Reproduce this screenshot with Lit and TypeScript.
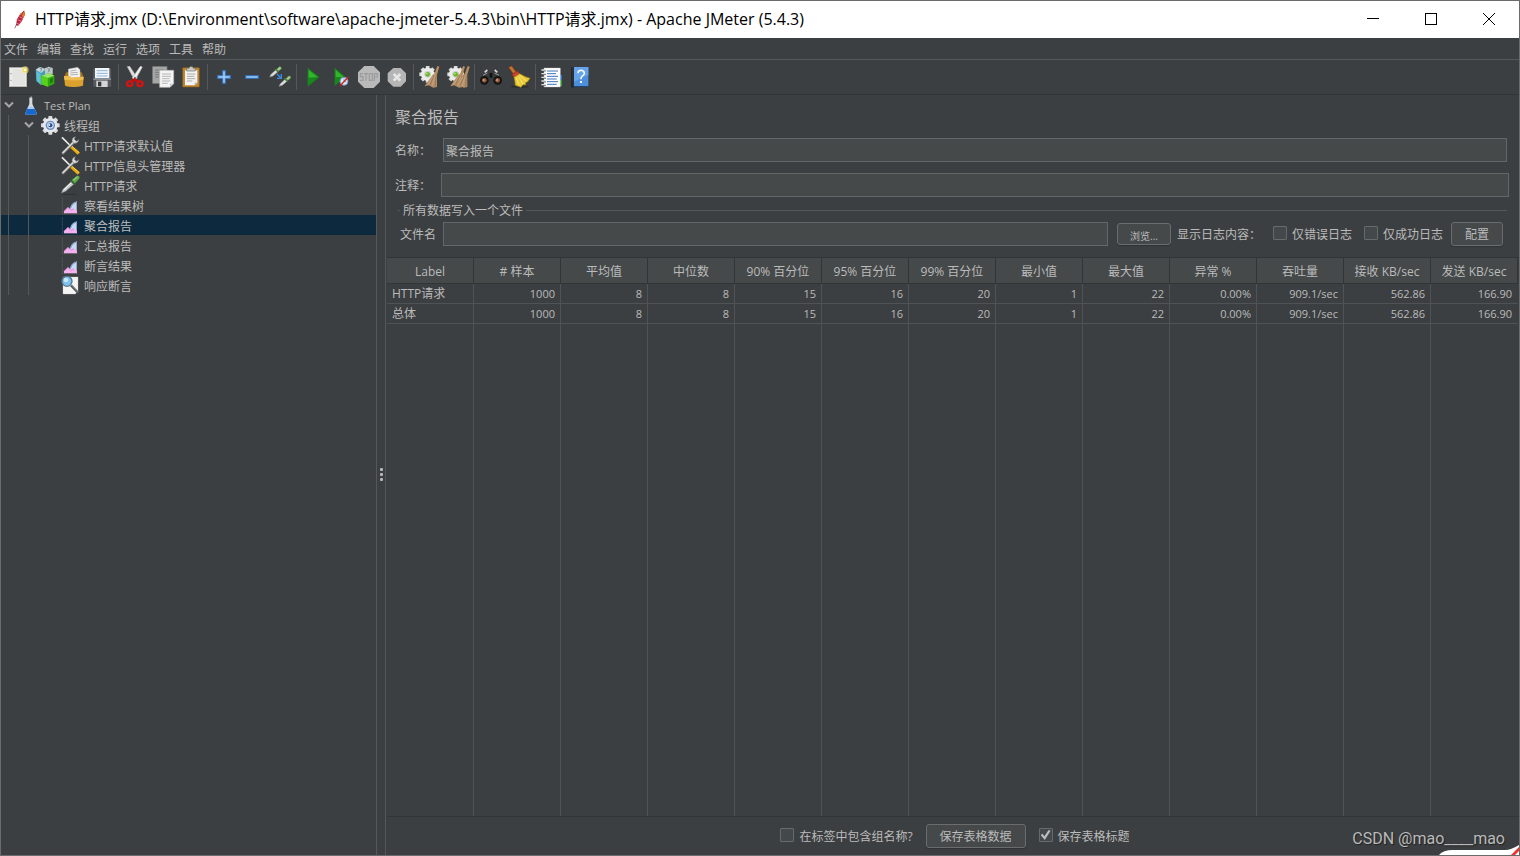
import { LitElement, html, css, svg, TemplateResult } from "lit";
import { customElement, property, state } from "lit/decorators.js";
import { classMap } from "lit/directives/class-map.js";

type Glyph = TemplateResult<2>;

/* Toolbar glyphs, drawn on a 72-unit grid */
const gear = (x: number, y: number, r: number) => svg`
  <g transform="translate(${x} ${y})">
    ${[0, 45, 90, 135].map((a) => svg`<rect x=${-r * 0.22} y=${-r} width=${r * 0.44} height=${r * 2} fill="#dcdcdc" transform="rotate(${a})"/>`)}
    <circle r=${r * 0.8} fill="#ececec"/><circle r=${r * 0.4} fill="#c9cfc0"/>
    <circle r=${r * 0.28} fill="#6cb52c"/><circle cx=${-r * 0.1} cy=${-r * 0.1} r=${r * 0.12} fill="#a5e066"/>
  </g>`;

const whisk = (dx: number) => svg`
  <g transform="translate(${dx} 0)">
    <path d="M58 3 64 5 56 32 48 30Z" fill="#b98d5d"/>
    <path d="M46 27 57 31 57 66 46 68 32 61 20 64 32 46Z" fill="#b5906a"/>
    <path d="M48 32 36 60M54 33 52 65" stroke="#8d6a48" stroke-width="2" fill="none"/>
    <path d="M51 32 42 62M44 36 29 60" stroke="#d0ae86" stroke-width="2" fill="none"/>
  </g>`;

const dropper = svg`
  <path d="M0 32 4 24 19 10 25 16 10 29Z" fill="#dedede" stroke="#8d8d8d" stroke-width="1.5"/>
  <path d="M17 8 26 17" stroke="#4c7a3a" stroke-width="5"/>
  <path d="M21 9 29 1Q36 0 35 7L27 14Z" fill="#a0cd8b" stroke="#5d9548" stroke-width="1"/>`;

const ICONS: Record<string, Glyph> = {
  new: svg`
    <rect x="10" y="8" width="52" height="57" fill="#ececea" stroke="#bdbdb8" stroke-width="2"/>
    <rect x="19" y="12" width="38" height="49" fill="#e3e3e1"/>
    <circle cx="15" cy="26" r="2" fill="#8e8e8e"/><circle cx="15" cy="46" r="2" fill="#8e8e8e"/>
    <circle cx="57" cy="15" r="11" fill="#f3ea8c" opacity=".6"/><circle cx="57" cy="15" r="7" fill="#ecd94a"/><circle cx="57" cy="15" r="4" fill="#fffde0"/>`,
  templates: svg`
    <path d="M5 14 17 6 34 12 34 56 20 60 7 48Z" fill="#3f9cb8"/>
    <path d="M5 14 17 6 34 12 22 24Z" fill="#c9d4d8"/><path d="M7 18 20 26 20 58 8 48Z" fill="#63bdd4"/>
    <path d="M32 10 44 5 56 9 56 28 34 32Z" fill="#bfc9cc"/><path d="M14 6 24 14M24 6 20 20M40 7 48 20M50 7 42 22" stroke="#7c8c92" stroke-width="2.500"/>
    <path d="M22 32 46 24 61 32 61 56 42 65 22 58Z" fill="#2fa80e"/><path d="M22 32 46 24 61 32 41 39Z" fill="#9be36a"/>
    <path d="M22 32 41 39 42 65 22 58Z" fill="#58d11d"/><path d="M48 42 56 38 56 51 49 55Z" fill="#1a7605"/>`,
  open: svg`
    <path d="M8 32 13 22 59 22 63 32 63 60 8 60Z" fill="#a87415"/>
    <path d="M19 12 47 7 54 14 55 42 19 42Z" fill="#f2f2f2" stroke="#aaa"/><path d="M25 18 43 15M25 24 47 22M25 30 48 28" stroke="#a2a2a2" stroke-width="2.500"/>
    <path d="M6 33 23 33 28 38 65 35 63 62 Q36 69 10 63Z" fill="#dba12e"/><path d="M6 33 23 33 28 38 65 35 64 44 Q34 48 7 44Z" fill="#edbd52"/>`,
  save: svg`
    <rect x="8" y="9" width="57" height="58" rx="3" fill="#55585e" stroke="#34363a" stroke-width="2"/>
    <rect x="15" y="9" width="43" height="31" fill="#f2f5f8"/><path d="M20 17H53M20 25H53M20 33H53" stroke="#8fb3d8" stroke-width="3"/>
    <rect x="10" y="40" width="53" height="5" fill="#8a8f97"/>
    <rect x="19" y="47" width="34" height="19" fill="#d4d4d6"/><rect x="24" y="50" width="10" height="14" fill="#34363a"/>`,
  cut: svg`
    <path d="M13 5 20 4 43 39 35 46Z" fill="#e0e0e0" stroke="#b5b5b5" stroke-width="2"/><path d="M58 6 52 4 28 39 36 46Z" fill="#f4f4f4" stroke="#b5b5b5" stroke-width="2"/>
    <circle cx="36" cy="38" r="2.500" fill="#555"/>
    <ellipse cx="20" cy="56" rx="8" ry="7" fill="none" stroke="#d11414" stroke-width="7"/><ellipse cx="51" cy="56" rx="8" ry="7" fill="none" stroke="#d11414" stroke-width="7"/>
    <path d="M26 50 35 43 45 50" fill="none" stroke="#c31010" stroke-width="8"/>`,
  copy: svg`
    <rect x="5" y="5" width="43" height="50" fill="#a5a7a7" stroke="#7d7f7f" stroke-width="2"/><path d="M12 15H38M12 22H38M12 29H26M12 36H24" stroke="#77797a" stroke-width="3"/>
    <path d="M26 16H68V56L57 67H26Z" fill="#f4f4f4" stroke="#b6b6b6" stroke-width="2"/><path d="M57 67V56H68Z" fill="#c6c6c6"/>
    <path d="M33 27H60M33 34H60M33 41H56M33 48H58M33 55H50" stroke="#a8a8a8" stroke-width="2.500"/>`,
  paste: svg`
    <rect x="11" y="8" width="50" height="58" rx="2" fill="#c08833" stroke="#83591b" stroke-width="2"/>
    <path d="M18 16H55V53L47 61H18Z" fill="#f3f3f3"/><path d="M47 61V53H55Z" fill="#a9a9a9"/>
    <path d="M24 27H49M24 34H46M24 41H49M24 48H40" stroke="#9e9e9e" stroke-width="2.500"/>
    <path d="M23 10H30L33 5H40L43 10H49V18H23Z" fill="#c9cbc6" stroke="#74766f" stroke-width="2"/>`,
  expand: svg`<path d="M31 16H41V31H56V41H41V56H31V41H16V31H31Z" fill="#5f9fe4" stroke="#2c66ae" stroke-width="2"/><path d="M36 20V52M20 36H52" stroke="#b5d7fb" stroke-width="3"/>`,
  collapse: svg`<rect x="16" y="31" width="40" height="10" fill="#5f9fe4" stroke="#2c66ae" stroke-width="2"/><path d="M20 36H52" stroke="#a9d0fa" stroke-width="3"/>`,
  toggle: svg`
    <g transform="translate(5 4)">${dropper}</g><g transform="translate(33 32)">${dropper}</g>
    <path d="M27 27 38 38M40 27V40H27" fill="none" stroke="#3d8be0" stroke-width="4"/>`,
  start: svg`<path d="M20 8 55 36 20 65Z" fill="#17891a"/><path d="M23 15 49 36 23 38Z" fill="#35b52e"/>`,
  startNoTimers: svg`
    <path d="M17 8 49 35 17 63Z" fill="#17891a"/><path d="M20 15 43 35 20 37Z" fill="#35b52e"/>
    <circle cx="45" cy="49" r="12" fill="#dce9f5" stroke="#6b93bd" stroke-width="3"/><path d="M45 41V50H52" fill="none" stroke="#4a77a8" stroke-width="2"/>
    <path d="M33 62 58 36" stroke="#d81d1d" stroke-width="4"/>`,
  stop: svg`
    <path d="M22 3H50L69 22V50L50 69H22L3 50V22Z" fill="#b9b9b9"/>
    <g fill="none" stroke="#9c9c9c" stroke-width="3.500"><path d="M18 26H10V35H18V46H9M21 26H33M27 26V47M37 26H46V46H37ZM52 48V26H61V36H52"/></g>`,
  shutdown: svg`
    <path d="M25 9H47L63 25V49L47 65H25L8 49V25Z" fill="#b5b5b5"/><path d="M26 27 46 47M46 27 26 47" stroke="#e6e6e6" stroke-width="8"/>`,
  clear: svg`${gear(29, 28, 25)}${whisk(0)}`,
  clearAll: svg`${gear(29, 28, 25)}${whisk(-7)}${whisk(7)}`,
  search: svg`
    <path d="M17 22 27 14 33 17 34 49 5 46Z" fill="#38393b"/><path d="M55 22 45 14 39 17 38 49 67 46Z" fill="#38393b"/>
    <path d="M17 22 25 15M47 15 55 22" stroke="#d6d6d6" stroke-width="5"/><path d="M12 31 25 24M47 24 60 31" stroke="#9c9c9c" stroke-width="3"/>
    <rect x="32" y="24" width="8" height="14" fill="#111"/>
    <circle cx="16" cy="46" r="13" fill="#141414"/><circle cx="56" cy="46" r="13" fill="#141414"/>
    <circle cx="16" cy="46" r="7" fill="#93583a"/><circle cx="56" cy="46" r="7" fill="#93583a"/>
    <circle cx="14" cy="45" r="3" fill="#cda083"/><circle cx="54" cy="45" r="3" fill="#cda083"/>`,
  resetSearch: svg`
    <ellipse cx="38" cy="65" rx="27" ry="4" fill="#2c2e2f"/>
    <path d="M5 7 14 3 28 22 20 28Z" fill="#c8742e" stroke="#843d11" stroke-width="2"/>
    <path d="M15 28 32 18 38 27 21 38Z" fill="#c9442c" stroke="#85261a" stroke-width="2"/>
    <path d="M21 37 38 26Q54 36 69 40L61 51 57 51 55 60 48 59 42 67 25 61Q24 46 21 37Z" fill="#e8ca38" stroke="#a98a18" stroke-width="2"/>
    <path d="M28 38 36 60M34 34 48 57M38 31 58 48" stroke="#f8e678" stroke-width="3"/>`,
  functions: svg`
    <rect x="58" y="30" width="8" height="14" fill="#2e74d0"/><rect x="58" y="45" width="8" height="18" fill="#2f9b2b"/>
    <rect x="12" y="9" width="49" height="57" fill="#fdfdfd" stroke="#c2c2c2"/>
    <path d="M21 18H54M21 26H48M21 34H54M21 42H50M21 50H54M21 58H50" stroke="#3f74b8" stroke-width="3"/>
    <path d="M4 15H17M4 26H17M4 37H17M4 48H17M4 59H17" stroke="#ddd" stroke-width="4"/><path d="M12 18H18M12 29H18M12 40H18M12 51H18M12 62H18" stroke="#333" stroke-width="2"/>`,
  help: svg`
    <path d="M10 7H19V67H10Z" fill="#15171a"/><path d="M10 7 15 5 20 7V66L13 67Z" fill="#2c3036"/>
    <rect x="18" y="6" width="43" height="58" fill="#4d8fdc"/><path d="M18 6H61V30L18 50Z" fill="#66a4ea"/><path d="M14 67 18 63H61V67Z" fill="#23466f"/>
    <path d="M30 25Q30 16 40 16 49 17 49 25 49 31 42 34 39 37 39 43" fill="none" stroke="#fff" stroke-width="4.500"/><rect x="36" y="48" width="6" height="6" fill="#fff"/>`,
};

/* Tree glyphs, drawn on a 60-unit grid */
const TREE_ICONS: Record<string, Glyph> = {
  flask: svg`
    <path d="M28 8H37V27L50 54Q51 59 47 59H19Q14 59 16 54L28 27Z" fill="#d5dade"/><path d="M23 38H42L50 54Q51 59 47 59H19Q14 59 16 54Z" fill="#1767cd"/>
    <path d="M24 36Q32 31 41 36L43 42H22Z" fill="#a9cdf5"/><path d="M34 3 37 9H28Z" fill="#9fa6ab"/>`,
  gear: svg`
    <g transform="translate(31 31)">${[0, 45, 90, 135].map((a) => svg`<rect x="-6" y="-28" width="12" height="56" rx="2" fill="#d9dce0" transform="rotate(${a})"/>`)}
    <circle r="22" fill="#e6e8ec"/><circle r="14" fill="#6d8fbe"/><circle r="10" fill="#c3d5ec"/><circle r="6" fill="#22488a"/><circle cx="-3" cy="-1" r="3" fill="#f0f6fd"/></g>`,
  tools: svg`
    <path d="M6 7 29 30" stroke="#e2e2e2" stroke-width="5"/><path d="M28 31 34 37" stroke="#8b8b8b" stroke-width="5"/>
    <path d="M9 54 42 21" stroke="#6e6e6e" stroke-width="9" stroke-linecap="round"/><path d="M9 53 42 20" stroke="#d6d6d4" stroke-width="5" stroke-linecap="round"/>
    <path d="M46 5Q36 7 36 18L43 25Q54 25 57 14L49 19 43 13Z" fill="#dcdcda" stroke="#777" stroke-width="1.500"/>
    <path d="M34 36 56 56" stroke="#eaa90c" stroke-width="9"/><path d="M36 34 58 53" stroke="#ffd75c" stroke-width="2.500"/><path d="M6 7 32 33" stroke="#fafafa" stroke-width="1.500"/>`,
  dropper: svg`
    <path d="M10 58H50" stroke="#26292a" stroke-width="3" opacity=".6"/>
    <path d="M4 54 9 43 33 20 41 28 17 49Z" fill="#c9cdcd" stroke="#777c7c" stroke-width="1.500"/><path d="M11 45 34 23" stroke="#fff" stroke-width="3"/>
    <path d="M31 15 46 29" stroke="#39662c" stroke-width="5"/><path d="M35 15 50 3Q58 1 59 7 59 11 45 25Z" fill="#5fae4a"/><path d="M40 15 52 6" stroke="#a4dc8e" stroke-width="3"/>`,
  chart: svg`
    <path d="M7 8V56H54" fill="none" stroke="#77797b" stroke-width="2" stroke-dasharray="3 3"/>
    <path d="M29 43Q33 24 50 19V54H35Z" fill="#c9d8f4"/><path d="M30 42Q34 27 50 20" fill="none" stroke="#6f92d2" stroke-width="2.500"/>
    <path d="M12 55V49L24 37 33 46 42 41 51 48V55Z" fill="#f3b2ee"/><path d="M12 49 24 37 33 46 42 41" fill="none" stroke="#e07fd2" stroke-width="2.500"/>`,
  lens: svg`
    <path d="M9 6H54V48L46 57H9Z" fill="#f5f5f5" stroke="#c2c2c2"/><path d="M33 31 55 54" stroke="#4f5354" stroke-width="7"/><path d="M34 30 55 51" stroke="#a8adae" stroke-width="2"/>
    <circle cx="21" cy="19" r="15" fill="#7dc1ec" stroke="#55778f" stroke-width="4"/><circle cx="18" cy="15" r="7" fill="#c8e8fb"/>`,
};

interface Tool { icon: string; label: string }
const TOOLS: Tool[][] = [
  [{ icon: "new", label: "新建" }, { icon: "templates", label: "模板" }, { icon: "open", label: "打开" }, { icon: "save", label: "保存" }],
  [{ icon: "cut", label: "剪切" }, { icon: "copy", label: "复制" }, { icon: "paste", label: "粘贴" }],
  [{ icon: "expand", label: "展开" }, { icon: "collapse", label: "折叠" }, { icon: "toggle", label: "切换" }],
  [{ icon: "start", label: "启动" }, { icon: "startNoTimers", label: "不停顿开始" }, { icon: "stop", label: "停止" }, { icon: "shutdown", label: "关闭" }],
  [{ icon: "clear", label: "清除" }, { icon: "clearAll", label: "清除全部" }],
  [{ icon: "search", label: "查找" }, { icon: "resetSearch", label: "重置查找" }],
  [{ icon: "functions", label: "函数助手" }, { icon: "help", label: "帮助" }],
];

interface Node { label: string; depth: number; icon: string; open?: boolean; latin?: boolean }
const NODES: Node[] = [
  { label: "Test Plan", depth: 0, icon: "flask", open: true, latin: true },
  { label: "线程组", depth: 1, icon: "gear", open: true },
  { label: "HTTP请求默认值", depth: 2, icon: "tools" },
  { label: "HTTP信息头管理器", depth: 2, icon: "tools" },
  { label: "HTTP请求", depth: 2, icon: "dropper" },
  { label: "察看结果树", depth: 2, icon: "chart" },
  { label: "聚合报告", depth: 2, icon: "chart" },
  { label: "汇总报告", depth: 2, icon: "chart" },
  { label: "断言结果", depth: 2, icon: "chart" },
  { label: "响应断言", depth: 2, icon: "lens" },
];

const COLUMNS = ["Label", "# 样本", "平均值", "中位数", "90% 百分位", "95% 百分位", "99% 百分位", "最小值", "最大值", "异常 %", "吞吐量", "接收 KB/sec", "发送 KB/sec"];
const ROWS = [
  ["HTTP请求", "1000", "8", "8", "15", "16", "20", "1", "22", "0.00%", "909.1/sec", "562.86", "166.90"],
  ["总体", "1000", "8", "8", "15", "16", "20", "1", "22", "0.00%", "909.1/sec", "562.86", "166.90"],
];

const controls = css`
  *, *::before { box-sizing: border-box; }
  button, input { font: inherit; color: inherit; margin: 0; }
  .btn { height: 24px; padding: 2px 0 0; color: #bbb; background: #45494a; border: 1px solid #6a6d6e; border-radius: 3px; box-shadow: 0 1px 1px #303335; white-space: nowrap; }
  .box { appearance: none; flex: none; display: grid; place-items: center; width: 14px; height: 14px; margin-bottom: 4px; background: #43484a; border: 1px solid #676a6b; border-radius: 1px; }
  .box:checked::before { content: ""; width: 10px; height: 10px; background: #bbb; clip-path: polygon(0 50%, 20% 38%, 38% 62%, 80% 0, 100% 8%, 42% 100%); }
  .check { display: flex; align-items: center; gap: 5px; padding-top: 2px; white-space: nowrap; }
`;

@customElement("jm-titlebar")
class TitleBar extends LitElement {
  static styles = css`
    :host { display: flex; align-items: center; height: 37px; padding: 0 1px 2px 0; box-sizing: border-box; background: #fff; color: #000; }
    .feather { width: 14px; height: 20px; margin-left: 11px; }
    .title { flex: 1; margin: 0 0 0 9px; font-size: 16px; font-weight: 400; white-space: nowrap; }
    .win { width: 58px; height: 35px; padding: 0; border: 0; background: none; display: grid; place-items: center; }
    .win svg { width: 14px; height: 14px; fill: none; stroke: #000; }
  `;
  render() {
    return html`
      <svg class="feather" viewBox="0 0 42 60" aria-hidden="true">
        <path d="M36 6Q40 10 38 18L30 36 18 51 12 48 15 31 25 14Z" fill="#c8243c"/>
        <path d="M36 6Q40 10 38 18L34 26 24 16Z" fill="#e8772a"/><path d="M36 5 20 34 8 58" fill="none" stroke="#6d2551" stroke-width="2"/>
        <path d="M13 42 23 47M17 32 28 37M22 23 32 28" stroke="#f4b8b4" stroke-width="2"/>
      </svg>
      <h1 class="title">HTTP请求.jmx (D:\\Environment\\software\\apache-jmeter-5.4.3\\bin\\HTTP请求.jmx) - Apache JMeter (5.4.3)</h1>
      <button class="win" aria-label="最小化"><svg viewBox="0 0 14 14"><path d="M1 6.500H13"/></svg></button>
      <button class="win" aria-label="最大化"><svg viewBox="0 0 14 14"><rect x="1.500" y="1.500" width="11" height="11"/></svg></button>
      <button class="win" aria-label="关闭窗口"><svg viewBox="0 0 14 14"><path d="M1 1 13 13M13 1 1 13"/></svg></button>
    `;
  }
}

@customElement("jm-toolbar")
class ToolBar extends LitElement {
  static styles = css`
    :host { display: flex; height: 35px; padding: 0 3px; border-bottom: 1px solid #323537; box-sizing: border-box; }
    .group { display: flex; align-items: center; }
    .group + .group::before { content: ""; width: 1px; height: 26px; margin: 0 2px; background: #55585a; }
    .tool { width: 28px; height: 32px; padding: 0; border: 0; background: none; display: grid; place-items: center; }
    .tool svg { width: 24px; height: 24px; }
  `;
  render() {
    return TOOLS.map((g) => html`<div class="group">${g.map((t) => html`
      <button class="tool" aria-label=${t.label}><svg viewBox="0 0 72 72">${ICONS[t.icon]}</svg></button>`)}</div>`);
  }
}

@customElement("jm-tree")
class Tree extends LitElement {
  @state() private selected = 6;
  static styles = css`
    :host { display: block; }
    .list { list-style: none; margin: 0; padding: 0; }
    .row { display: flex; height: 20px; white-space: nowrap; }
    .on { background: #0d293e; }
    .guide { width: 20px; height: 20px; padding-left: 7px; box-sizing: border-box; }
    .guide::before { content: ""; display: block; width: 1px; height: 20px; background: #55585a; }
    .twist { width: 20px; height: 20px; fill: none; stroke: #a4a6a7; stroke-width: 2; }
    .icon { width: 20px; height: 20px; margin-right: 3px; }
    .text { padding-top: 2px; }
    .latin { padding-top: 1px; font-size: 11px; }
  `;
  render() {
    return html`<ul class="list" role="tree">${NODES.map((n, i) => html`
      <li class=${classMap({ row: true, on: i === this.selected })} role="treeitem" aria-selected=${i === this.selected} @click=${() => (this.selected = i)}>
        ${Array.from({ length: n.depth }, () => html`<span class="guide"></span>`)}
        <svg class="twist" viewBox="0 0 20 20">${n.open ? svg`<path d="M4 7.500 8 11.500 12 7.500"/>` : ""}</svg>
        <svg class="icon" viewBox="3 0 60 60">${TREE_ICONS[n.icon]}</svg>
        <span class=${classMap({ text: true, latin: !!n.latin })}>${n.label}</span>
      </li>`)}</ul>`;
  }
}

@customElement("jm-report-form")
class ReportForm extends LitElement {
  static styles = [controls, css`
    :host { display: block; padding: 10px 9px 0 8px; }
    .heading { margin: 0; font-size: 16px; font-weight: 400; line-height: 24px; }
    .line { display: flex; align-items: center; height: 24px; }
    .name { margin-top: 9px; padding-right: 3px; }
    .note { margin-top: 11px; padding-right: 1px; }
    .label, .caption { padding-top: 2px; }
    .label { width: 46px; }
    .name .label { width: 48px; }
    .text { flex: 1; min-width: 0; height: 24px; padding: 2px 2px 0; background: #45494a; border: 1px solid #646767; border-radius: 0; outline: 0; }
    .file { margin: 4px 3px 11px; padding: 0 4px 0 2px; border: 0; border-top: 1px solid #55585a; min-width: 0; }
    .legend { height: 19px; padding: 0 3px; line-height: 20px; }
    .file .line { margin-top: 2px; }
    .file .label { width: 43px; }
    .browse { width: 54px; height: 22px; margin: 0 6px 0 9px; font-size: 10px; }
    .check { margin-left: 12px; }
    .config { width: 52px; margin-left: 8px; }
  `];
  render() {
    return html`
      <h2 class="heading">聚合报告</h2>
      <div class="line name"><label class="label" for="name">名称：</label><input class="text" id="name" .value=${"聚合报告"}></div>
      <div class="line note"><label class="label" for="note">注释：</label><input class="text" id="note"></div>
      <fieldset class="file">
        <legend class="legend">所有数据写入一个文件</legend>
        <div class="line">
          <label class="label" for="file">文件名</label><input class="text" id="file">
          <button class="btn browse">浏览...</button>
          <span class="caption">显示日志内容：</span>
          <label class="check"><input class="box" type="checkbox">仅错误日志</label>
          <label class="check"><input class="box" type="checkbox">仅成功日志</label>
          <button class="btn config">配置</button>
        </div>
      </fieldset>`;
  }
}

@customElement("jm-report-table")
class ReportTable extends LitElement {
  @property({ attribute: false }) rows: string[][] = [];
  static styles = css`
    :host { display: block; min-height: 0; padding-right: 1px; border-top: 1px solid #323537; border-bottom: 1px solid #323537; }
    .grid { width: 100%; height: 100%; table-layout: fixed; border-collapse: separate; border-spacing: 0; }
    .head { height: 26px; padding: 3px 0 0; box-sizing: border-box; font-weight: 400; line-height: 20px; background: #45494a; border-right: 1px solid #323537; border-bottom: 1px solid #323537; white-space: nowrap; }
    .cell { height: 20px; padding: 0 5px; box-sizing: border-box; font-size: 11px; line-height: 19px; text-align: right; border-right: 1px solid #505355; border-bottom: 1px solid #505355; white-space: nowrap; }
    .cell:first-child { font-size: 12px; text-align: left; }
    .rest { padding: 0; border-right: 1px solid #505355; }
    .cell:last-child, .rest:last-child { border-right-color: transparent; }
  `;
  render() {
    return html`<table class="grid">
      <thead><tr>${COLUMNS.map((c) => html`<th class="head" scope="col">${c}</th>`)}</tr></thead>
      <tbody>
        ${this.rows.map((r) => html`<tr>${r.map((v) => html`<td class="cell">${v}</td>`)}</tr>`)}
        <tr aria-hidden="true">${COLUMNS.map(() => html`<td class="rest"></td>`)}</tr>
      </tbody>
    </table>`;
  }
}

@customElement("app-root")
class AppRoot extends LitElement {
  static styles = [controls, css`
    :host { display: flex; flex-direction: column; position: relative; height: 100vh; overflow: hidden; box-sizing: border-box; border: 1px solid #6b6b6b; background: #3c3f41; color: #bbb; font: 12px/20px "Open Sans", "Noto Sans CJK SC", sans-serif; }
    .menu { display: flex; gap: 9px; height: 22px; padding: 1px 3px 0; line-height: 22px; border-bottom: 1px solid #55585a; }
    .menu a { color: inherit; text-decoration: none; }
    .main { flex: 1; min-height: 0; display: grid; grid-template-columns: 375px 10px minmax(0, 1fr); }
    .split { display: grid; place-content: center; gap: 2px; padding-bottom: 2px; border-left: 1px solid #55585a; border-right: 1px solid #55585a; }
    .dot { width: 3px; height: 3px; border-radius: 1px; background: #b5b7b8; }
    .panel { display: flex; flex-direction: column; min-height: 0; padding-left: 1px; }
    .table { flex: 1; }
    .foot { display: flex; align-items: center; justify-content: center; gap: 13px; height: 38px; padding-left: 4px; }
    .export { width: 100px; }
    .mark { position: absolute; right: 14px; bottom: 6px; font: 16px/20px Roboto, sans-serif; color: #b9babb; text-shadow: 1px 1px 1px #222; }
    .badge { position: absolute; right: 0; bottom: 0; width: 80px; height: 10px; }
  `];
  render() {
    return html`
      <jm-titlebar></jm-titlebar>
      <nav class="menu">${["文件", "编辑", "查找", "运行", "选项", "工具", "帮助"].map((m) => html`<a href="#">${m}</a>`)}</nav>
      <jm-toolbar></jm-toolbar>
      <div class="main">
        <jm-tree></jm-tree>
        <div class="split"><i class="dot"></i><i class="dot"></i><i class="dot"></i></div>
        <section class="panel">
          <jm-report-form></jm-report-form>
          <jm-report-table class="table" .rows=${ROWS}></jm-report-table>
          <div class="foot">
            <label class="check"><input class="box" type="checkbox">在标签中包含组名称?</label>
            <button class="btn export">保存表格数据</button>
            <label class="check"><input class="box" type="checkbox" checked>保存表格标题</label>
          </div>
        </section>
      </div>
      <svg class="badge" viewBox="0 0 80 10" aria-hidden="true">
        <path d="M0 10Q4 5 14 5H66Q72 5 80 0V10Z" fill="#fff"/><path d="M72 10 80 2V6L76 10Z" fill="#e33"/>
      </svg>
      <span class="mark">CSDN @mao____mao</span>`;
  }
}
